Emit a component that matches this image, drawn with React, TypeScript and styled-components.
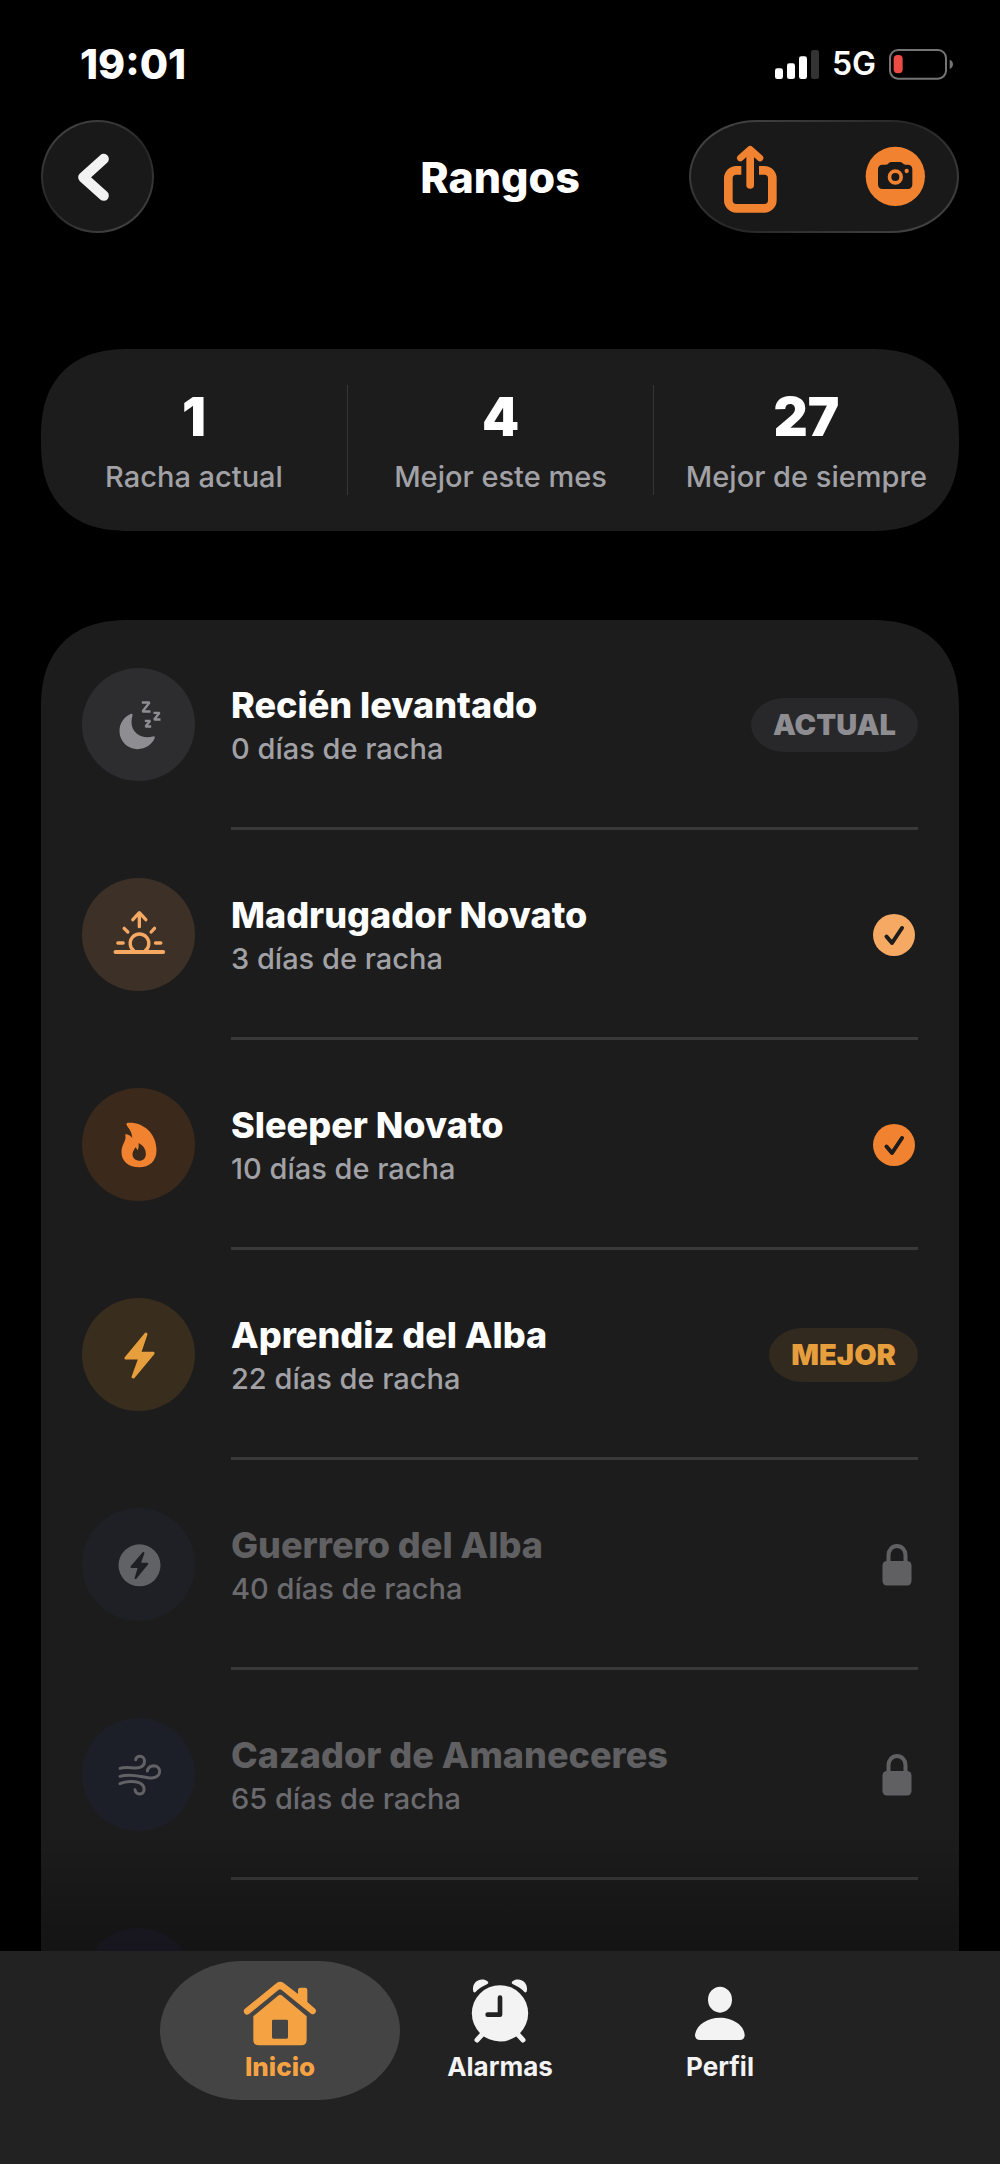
import React from "react";
import styled, { createGlobalStyle } from "styled-components";

const GlobalStyle = createGlobalStyle`
  *, *::before, *::after { box-sizing: border-box; }
  html, body { margin: 0; background: #000; }
  body { font-family: Inter, "Liberation Sans", sans-serif; color: #fff; }
  h1, h2, p, dl, dt, dd, ul { margin: 0; padding: 0; }
  svg { display: block; flex: none; }
`;

const Screen = styled.div`
  height: 100vh;
  display: flex;
  flex-direction: column;
  overflow: hidden;
  background: #000;
`;

const StatusBar = styled.div`
  flex: none;
  height: 120px;
  padding: 8px 46px 0 80px;
  display: flex;
  align-items: center;
  justify-content: space-between;
`;

const Clock = styled.time`
  font-size: 41px;
  font-weight: 800;
  line-height: 48px;
`;

const StatusIcons = styled.div`
  display: flex;
  align-items: center;
  gap: 12px;
`;

const Network = styled.span`
  font-size: 32px;
  font-weight: 600;
  line-height: 40px;
`;

const Header = styled.header`
  flex: none;
  padding: 0 41px;
  display: grid;
  grid-template-columns: 1fr auto 1fr;
  align-items: center;
`;

const Title = styled.h1`
  font-size: 43px;
  font-weight: 800;
  line-height: 52px;
`;

const glass = `
  border: 2px solid transparent;
  background:
    linear-gradient(#191919, #191919) padding-box,
    linear-gradient(150deg, #484848, #262626 50%, #484848) border-box;
`;

const BackButton = styled.button`
  ${glass}
  width: 113px;
  height: 113px;
  padding: 0;
  border-radius: 50%;
  display: grid;
  place-items: center;
  color: #f2f2f2;
`;

const Actions = styled.div`
  ${glass}
  justify-self: end;
  width: 270px;
  height: 113px;
  padding: 0 31px;
  border-radius: 68px / 57px;
  display: flex;
  align-items: center;
  justify-content: space-between;
`;

const IconButton = styled.button`
  border: 0;
  padding: 0;
  background: none;
  color: #f08230;
`;

const Content = styled.main`
  position: relative;
  flex: 1;
  min-height: 0;
  overflow: hidden;
  padding: 116px 41px 0;
`;

const Fade = styled.div`
  position: absolute;
  left: 0;
  right: 0;
  bottom: 0;
  height: 120px;
  background: linear-gradient(rgba(0, 0, 0, 0), rgba(0, 0, 0, 0.3));
  pointer-events: none;
`;

const card = `
  background: #1c1c1c;
  border-radius: 88px;
  corner-shape: superellipse(1.25);
`;

const Stats = styled.dl`
  ${card}
  padding: 36px 0;
  display: grid;
  grid-template-columns: repeat(3, 1fr);
`;

const Stat = styled.div`
  display: flex;
  flex-direction: column-reverse;
  gap: 10px;
  text-align: center;

  & + & {
    border-left: 1px solid #363636;
  }
`;

const StatValue = styled.dd`
  font-size: 53px;
  font-weight: 900;
  line-height: 64px;
`;

const StatLabel = styled.dt`
  font-size: 29px;
  font-weight: 500;
  line-height: 36px;
  color: #a1a1a6;
  white-space: nowrap;
`;

const RankList = styled.ul`
  ${card}
  margin-top: 89px;
  padding: 0 41px;
  list-style: none;
`;

const Rank = styled.li`
  display: grid;
  grid-template-columns: 113px 1fr;
  column-gap: 36px;
`;

const Medal = styled.div<{ $bg: string; $fg: string }>`
  width: 113px;
  height: 113px;
  margin-top: 48px;
  border-radius: 50%;
  display: grid;
  place-items: center;
  background: ${(p) => p.$bg};
  color: ${(p) => p.$fg};
`;

const RankBody = styled.div`
  height: 210px;
  padding-top: 2px;
  display: flex;
  align-items: center;
  justify-content: space-between;
  border-bottom: 3px solid #393939;
`;

const RankText = styled.div`
  display: grid;
  gap: 4px;
`;

const RankName = styled.h2<{ $locked: boolean }>`
  font-size: 36px;
  font-weight: 800;
  line-height: 44px;
  color: ${(p) => (p.$locked ? "#606062" : "#fff")};
`;

const RankDays = styled.p<{ $locked: boolean }>`
  font-size: 29px;
  font-weight: 500;
  line-height: 36px;
  color: ${(p) => (p.$locked ? "#6b6b6f" : "#a1a1a6")};
`;

const Badge = styled.span<{ $bg: string; $fg: string }>`
  padding: 0 22px;
  border-radius: 34px / 27px;
  font-size: 29px;
  font-weight: 900;
  line-height: 54px;
  background: ${(p) => p.$bg};
  color: ${(p) => p.$fg};
`;

const TabBar = styled.nav`
  flex: none;
  height: 213px;
  padding-top: 10px;
  display: grid;
  grid-template-columns: repeat(3, 220px);
  justify-content: center;
  align-items: start;
  background: #222;
`;

const Tab = styled.button<{ $active?: boolean }>`
  margin: 0 -10px;
  height: 139px;
  padding: 0;
  border: 0;
  border-radius: 84px / 70px;
  display: flex;
  flex-direction: column;
  align-items: center;
  justify-content: center;
  gap: 5px;
  font-family: inherit;
  font-size: 26px;
  font-weight: ${(p) => (p.$active ? 800 : 700)};
  line-height: 30px;
  background: ${(p) => (p.$active ? "#444" : "transparent")};
  color: ${(p) => (p.$active ? "#f5a243" : "#f3f3f3")};
`;

const SignalIcon = () => (
  <svg width="46" height="31" viewBox="822 144 138 93" fill="#fff" aria-hidden="true">
    <rect x="825" y="202" width="24" height="32" rx="7" />
    <rect x="861" y="187" width="24" height="47" rx="7" />
    <rect x="897" y="166" width="24" height="68" rx="7" />
    <rect x="933" y="147" width="24" height="87" rx="7" fill="#333" />
  </svg>
);

const BatteryIcon = () => (
  <svg width="66" height="31" viewBox="1164 144 198 93" aria-hidden="true">
    <rect x="1170" y="147" width="168" height="86" rx="24" fill="none" stroke="#747474" strokeWidth="6" />
    <rect x="1181" y="162" width="27" height="55" rx="12" fill="#ec4b45" />
    <path d="M1349 176Q1359 180 1359 190T1349 204Z" fill="#747474" />
  </svg>
);

const ChevronIcon = () => (
  <svg width="43" height="50" viewBox="228 456 129 150" fill="none" stroke="currentColor" strokeWidth="31" strokeLinecap="round" strokeLinejoin="round" aria-hidden="true">
    <path d="M311 477L250 532L311 587" />
  </svg>
);

const ShareIcon = () => (
  <svg width="57" height="77" viewBox="666 414 171 231" fill="none" stroke="currentColor" strokeWidth="26" aria-hidden="true">
    <path d="M724 511H709a24 24 0 0 0-24 24V601a24 24 0 0 0 24 24H793a24 24 0 0 0 24-24V535a24 24 0 0 0-24-24H777" />
    <path d="M750.500 555V455" strokeWidth="23" strokeLinecap="round" />
    <path d="M721 474L750.500 448L780 474" strokeWidth="20" strokeLinecap="round" strokeLinejoin="round" />
  </svg>
);

const CameraIcon = () => (
  <svg width="61" height="61" viewBox="1095 441 183 183" aria-hidden="true">
    <circle cx="1186" cy="532" r="89" fill="currentColor" />
    <path d="M1148 497H1158Q1163 497 1166 493Q1169 489 1175 489H1199Q1205 489 1208 493Q1211 497 1216 497H1223Q1237 497 1237 511V556Q1237 570 1223 570H1148Q1134 570 1134 556V511Q1134 497 1148 497Z" fill="#191919" />
    <circle cx="1186" cy="534" r="17.500" fill="none" stroke="currentColor" strokeWidth="11" />
    <circle cx="1220" cy="516" r="6.500" fill="currentColor" />
  </svg>
);

const MoonIcon = () => (
  <svg width="60" height="60" viewBox="235.500 253.500 180 180" fill="currentColor" aria-hidden="true">
    <path d="M302 310C281 318 267 338 267 362A54 54 0 0 0 321 416C345 416 365 402 373 382Q374 375 367 378C335 386 303 368 303 335Q303 325 306 315Q307 308 302 310Z" />
    <g fill="none" stroke="currentColor" strokeWidth="7" strokeLinejoin="bevel">
      <path d="M334 276H357L336 303H360" />
      <path d="M369 307H387L371 327H390" />
      <path d="M343 331H359L345 348H362" />
    </g>
  </svg>
);

const SunriseIcon = () => (
  <svg width="60" height="60" viewBox="235.500 165 180 180" fill="none" stroke="currentColor" strokeWidth="10" strokeLinecap="round" strokeLinejoin="round" aria-hidden="true">
    <path d="M326.500 230V190M307 209L326.500 188L346 209" />
    <path d="M281 235L292 246M372 235L362 246M262 279H278M375 279H391" />
    <path d="M311 303A28 28 0 1 1 343 303" />
    <path d="M255 306H398" strokeWidth="12" />
  </svg>
);

const FlameIcon = () => (
  <svg width="60" height="60" viewBox="235.500 796 180 180" fill="currentColor" fillRule="evenodd" aria-hidden="true">
    <path d="M289 820C330 814 378 845 378 902C378 935 356 953 326 953C295 953 273 935 273 908C273 885 286 875 285 862L284 854Q296 853 305 865C305 848 296 838 290 829Q286 823 289 820ZM324 881C335 885 346 897 346 912C346 926 338 933 326 933C314 933 306 925 306 914C306 905 312 900 314 893Q319 896 321 902C325 895 325 888 324 881Z" />
  </svg>
);

const BoltIcon = () => (
  <svg width="60" height="60" viewBox="235.500 196.500 180 180" fill="currentColor" stroke="currentColor" strokeWidth="6" strokeLinejoin="round" aria-hidden="true">
    <path d="M346 222L285 295V297H326L306 353L309 354L369 282V280H329L348 224Z" />
  </svg>
);

const BoltCircleIcon = ({ cut }: { cut: string }) => (
  <svg width="60" height="60" viewBox="235.500 827 180 180" aria-hidden="true">
    <circle cx="327" cy="918" r="63" fill="currentColor" />
    <path d="M338 880L302 922V924H324L314 957L316 957L351 914V912H329L340 881Z" fill={cut} stroke={cut} strokeWidth="4" strokeLinejoin="round" />
  </svg>
);

const WindIcon = () => (
  <svg width="60" height="60" viewBox="-90 -90 180 180" fill="none" stroke="currentColor" strokeWidth="9" strokeLinecap="round" aria-hidden="true">
    <path d="M-57 -20C-36 -28 -14 -17 3 -23C22 -30 20 -56 3 -56Q-8 -56 -10 -46" />
    <path d="M-57 4C-20 -7 14 9 38 9C70 7 68 -28 43 -28Q27 -26 25 -12" />
    <path d="M-57 26C-38 17 -14 18 0 23C22 32 18 58 2 57Q-10 56 -12 44" />
  </svg>
);

const CheckIcon = ({ color }: { color: string }) => (
  <svg width="48" height="48" viewBox="0 0 48 48" role="img" aria-label="Conseguido">
    <circle cx="24" cy="24" r="21" fill={color} />
    <path d="M16.500 25.500L22 32L32 17" fill="none" stroke="#1c1c1c" strokeWidth="4" strokeLinecap="round" strokeLinejoin="round" />
  </svg>
);

const LockIcon = () => (
  <svg width="42" height="48" viewBox="0 0 42 48" role="img" aria-label="Bloqueado">
    <rect x="6.500" y="20" width="29" height="24.500" rx="4.500" fill="#606062" />
    <path d="M12.500 22V14a8.500 9 0 0 1 17 0V22" fill="none" stroke="#606062" strokeWidth="4" />
  </svg>
);

const HomeIcon = () => (
  <svg width="76" height="68" viewBox="35 115 228 204" fill="currentColor" aria-hidden="true">
    <path d="M203 160V148Q203 141 210 141H224Q231 141 231 148V184L255 205A10 10 0 0 1 243 220L153 147Q149 144 145 147L56 220A10 10 0 0 1 43 205L139 127Q149 119 160 127Z" />
    <path fillRule="evenodd" d="M145 164Q149 160 154 164L229 227V298Q229 314 213 314H85Q69 314 69 298V227ZM129 237Q125 237 125 241V290Q125 294 129 294H169Q173 294 173 290V241Q173 237 169 237Z" />
  </svg>
);

const AlarmIcon = () => (
  <svg width="64" height="68" viewBox="714 115 192 204" fill="currentColor" aria-hidden="true">
    <circle cx="810" cy="218" r="84.500" />
    <path d="M736 155Q729 157 729 148C727 122 752 109 771 121Q779 126 771 131Q749 140 736 155Z" />
    <path d="M884 155Q891 157 891 148C893 122 868 109 849 121Q841 126 849 131Q871 140 884 155Z" />
    <path d="M757 281L741 298M863 281L879 298" stroke="currentColor" strokeWidth="15" strokeLinecap="round" />
    <path d="M810 171V222H773" fill="none" stroke="#222" strokeWidth="14" strokeLinecap="round" strokeLinejoin="round" />
  </svg>
);

const PersonIcon = () => (
  <svg width="54" height="68" viewBox="98 115 162 204" fill="currentColor" aria-hidden="true">
    <ellipse cx="179" cy="177" rx="36" ry="39" />
    <path d="M120 298Q104 298 104 284C106 254 140 231 179 231S252 254 253 284Q253 298 238 298Z" />
  </svg>
);

const stats = [
  { label: "Racha actual", value: 1 },
  { label: "Mejor este mes", value: 4 },
  { label: "Mejor de siempre", value: 27 },
];

type RankItem = {
  name: string;
  days: number;
  bg: string;
  fg: string;
  icon: React.ReactNode;
  status: React.ReactNode;
  locked?: boolean;
};

const ranks: RankItem[] = [
  {
    name: "Recién levantado",
    days: 0,
    bg: "#2d2d2f",
    fg: "#8e8d92",
    icon: <MoonIcon />,
    status: <Badge $bg="#28282a" $fg="#8e8d92">ACTUAL</Badge>,
  },
  {
    name: "Madrugador Novato",
    days: 3,
    bg: "#3c3027",
    fg: "#f5a962",
    icon: <SunriseIcon />,
    status: <CheckIcon color="#f5a962" />,
  },
  {
    name: "Sleeper Novato",
    days: 10,
    bg: "#3b291c",
    fg: "#f08230",
    icon: <FlameIcon />,
    status: <CheckIcon color="#f08230" />,
  },
  {
    name: "Aprendiz del Alba",
    days: 22,
    bg: "#392d1e",
    fg: "#e79e3c",
    icon: <BoltIcon />,
    status: <Badge $bg="#32291f" $fg="#e79e3c">MEJOR</Badge>,
  },
  {
    name: "Guerrero del Alba",
    days: 40,
    bg: "#1f2025",
    fg: "#616266",
    icon: <BoltCircleIcon cut="#1f2025" />,
    status: <LockIcon />,
    locked: true,
  },
  {
    name: "Cazador de Amaneceres",
    days: 65,
    bg: "#1c1f27",
    fg: "#616266",
    icon: <WindIcon />,
    status: <LockIcon />,
    locked: true,
  },
];

export default function App() {
  return (
    <>
      <GlobalStyle />
      <Screen>
        <StatusBar>
          <Clock>19:01</Clock>
          <StatusIcons>
            <SignalIcon />
            <Network>5G</Network>
            <BatteryIcon />
          </StatusIcons>
        </StatusBar>
        <Header>
          <BackButton type="button" aria-label="Atrás">
            <ChevronIcon />
          </BackButton>
          <Title>Rangos</Title>
          <Actions>
            <IconButton type="button" aria-label="Compartir">
              <ShareIcon />
            </IconButton>
            <IconButton type="button" aria-label="Cámara">
              <CameraIcon />
            </IconButton>
          </Actions>
        </Header>
        <Content>
          <Stats>
            {stats.map((s) => (
              <Stat key={s.label}>
                <StatLabel>{s.label}</StatLabel>
                <StatValue>{s.value}</StatValue>
              </Stat>
            ))}
          </Stats>
          <RankList>
            {ranks.map((r) => (
              <Rank key={r.name}>
                <Medal $bg={r.bg} $fg={r.fg}>{r.icon}</Medal>
                <RankBody>
                  <RankText>
                    <RankName $locked={!!r.locked}>{r.name}</RankName>
                    <RankDays $locked={!!r.locked}>{r.days} días de racha</RankDays>
                  </RankText>
                  {r.status}
                </RankBody>
              </Rank>
            ))}
            <Rank>
              <Medal $bg="#201e29" $fg="#616266" />
            </Rank>
          </RankList>
          <Fade />
        </Content>
        <TabBar aria-label="Principal">
          <Tab type="button" $active aria-current="page">
            <HomeIcon />
            Inicio
          </Tab>
          <Tab type="button">
            <AlarmIcon />
            Alarmas
          </Tab>
          <Tab type="button">
            <PersonIcon />
            Perfil
          </Tab>
        </TabBar>
      </Screen>
    </>
  );
}
